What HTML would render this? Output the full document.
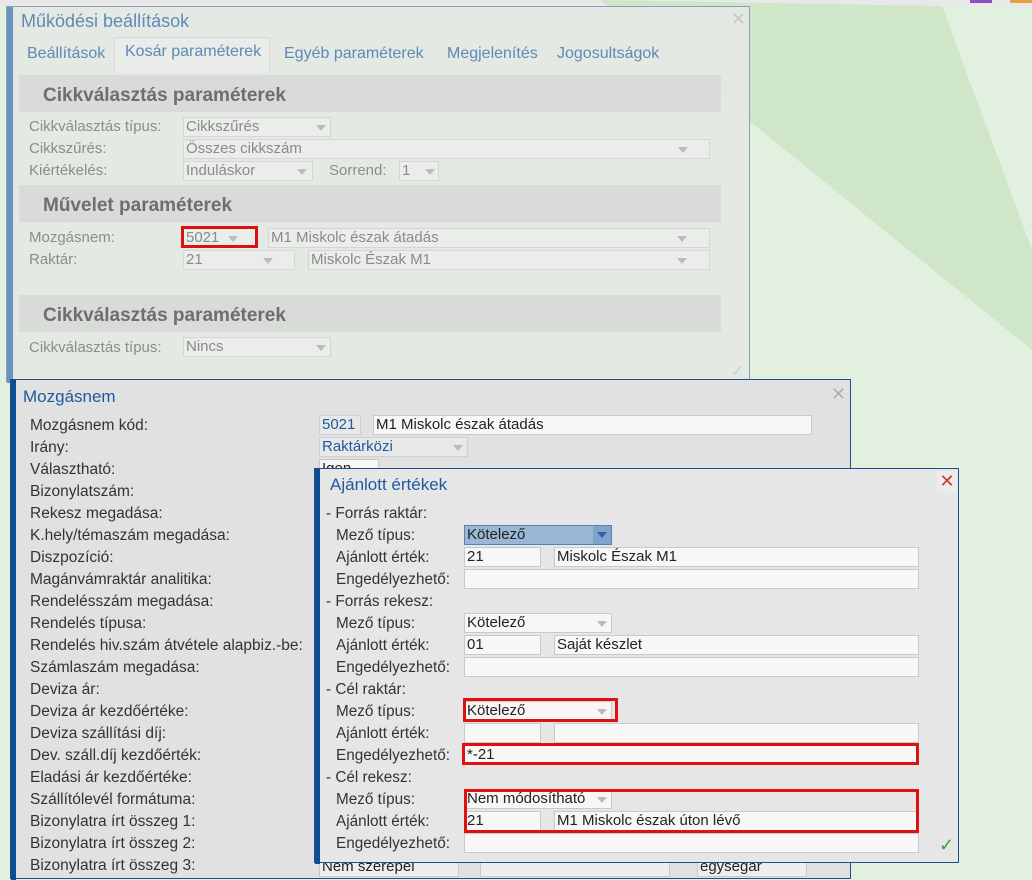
<!DOCTYPE html>
<html><head><meta charset="utf-8"><style>
*{margin:0;padding:0;box-sizing:border-box}
body{width:1032px;height:868px;overflow:hidden;position:relative;background:#e2f0e0;font-family:"Liberation Sans",Arial,sans-serif;}
.a{position:absolute;white-space:nowrap}
.in{position:absolute;height:20px;border:1px solid #c9c9c9;background:#f7f7f7;font-size:15px;line-height:18px;padding-left:2px;color:#222;white-space:nowrap;overflow:hidden}
.d1 .in{background:#eaedea;border-color:#d3d6d3;color:#8a8a8a}
.arr{position:absolute;width:0;height:0;border-left:5px solid transparent;border-right:5px solid transparent;border-top:6px solid #bbb}
.red{position:absolute;border:3px solid #e01010}
.sec{position:absolute;left:18px;width:702px;height:37px;background:#d8dbd8;font-weight:bold;font-size:19px;color:#6e6e6e;padding:10px 0 0 24px}
.l1{position:absolute;left:28px;font-size:15px;color:#8c8c8c;white-space:nowrap}
.l2{position:absolute;left:30px;font-size:15.5px;color:#333;white-space:nowrap}
.l3{position:absolute;font-size:15.3px;color:#333;white-space:nowrap}
</style></head><body>
<div class="a" style="left:0;top:0;width:1032px;height:6px;background:#e8e8e8"></div>
<div class="a" style="left:970px;top:0;width:22px;height:3px;background:#8a4fc0"></div>
<div class="a" style="left:1010px;top:0;width:22px;height:3px;background:#e8a040"></div>
<svg class="a" style="left:0;top:0" width="1032" height="868"><polygon points="600,0 942,6 1032,250 1032,350" fill="#cfe6c8"/></svg>

<!-- dialog 1 -->
<div class="a d1" style="left:6px;top:6px;width:744px;height:376px;background:rgba(228,232,228,0.93);border:1px solid #8aa0b8">
<div class="a" style="left:0;top:0;width:6px;height:376px;background:#6a94c0"></div>
<div class="a" style="left:14px;top:4px;font-size:18px;color:#5e8ab6">Működési beállítások</div>
<div class="a" style="left:724px;top:2px;font-size:18px;color:#c4c8c4">✕</div>
<div class="a" style="left:107px;top:30px;width:156px;height:36px;border:1px solid #d6dad6;border-bottom:none;background:#e9ece9"></div>
<div class="a" style="left:20px;top:38px;font-size:16px;color:#5e8ab6">Beállítások</div>
<div class="a" style="left:118px;top:36px;font-size:16px;color:#5e8ab6">Kosár paraméterek</div>
<div class="a" style="left:277px;top:38px;font-size:16px;color:#5e8ab6">Egyéb paraméterek</div>
<div class="a" style="left:440px;top:38px;font-size:16px;color:#5e8ab6">Megjelenítés</div>
<div class="a" style="left:550px;top:38px;font-size:16px;color:#5e8ab6">Jogosultságok</div>
<div class="sec" style="left:12px;top:68px">Cikkválasztás paraméterek</div>
<div class="l1" style="left:22px;top:111px">Cikkválasztás típus:</div>
<div class="in" style="left:176px;top:110px;width:148px">Cikkszűrés</div><div class="arr" style="left:309px;top:118px"></div>
<div class="l1" style="left:22px;top:133px">Cikkszűrés:</div>
<div class="in" style="left:176px;top:132px;width:527px">Összes cikkszám</div><div class="arr" style="left:671px;top:140px"></div>
<div class="l1" style="left:22px;top:155px">Kiértékelés:</div>
<div class="in" style="left:176px;top:154px;width:130px">Induláskor</div><div class="arr" style="left:290px;top:162px"></div>
<div class="l1" style="left:322px;top:155px">Sorrend:</div>
<div class="in" style="left:392px;top:154px;width:40px">1</div><div class="arr" style="left:418px;top:162px"></div>
<div class="sec" style="left:12px;top:178px">Művelet paraméterek</div>
<div class="l1" style="left:22px;top:222px">Mozgásnem:</div>
<div class="in" style="left:176px;top:221px;width:74px">5021</div><div class="arr" style="left:221px;top:229px"></div>
<div class="in" style="left:261px;top:221px;width:442px">M1 Miskolc észak átadás</div><div class="arr" style="left:670px;top:229px"></div>
<div class="l1" style="left:22px;top:244px">Raktár:</div>
<div class="in" style="left:176px;top:243px;width:112px">21</div><div class="arr" style="left:256px;top:251px"></div>
<div class="in" style="left:301px;top:243px;width:402px">Miskolc Észak M1</div><div class="arr" style="left:670px;top:251px"></div>
<div class="sec" style="left:12px;top:288px">Cikkválasztás paraméterek</div>
<div class="l1" style="left:22px;top:332px">Cikkválasztás típus:</div>
<div class="in" style="left:176px;top:330px;width:148px">Nincs</div><div class="arr" style="left:309px;top:338px"></div>
<div class="a" style="left:724px;top:354px;font-size:16px;color:#d0d4d0">✓</div>
</div>
<div class="red" style="left:181px;top:226px;width:77px;height:22px"></div>

<!-- dialog 2 -->
<div class="a" style="left:10px;top:379px;width:841px;height:500px;background:#e1e1e1;border:1px solid #1f4e8c">
<div class="a" style="left:0;top:0;width:5px;height:500px;background:#0e4c96"></div>
<div class="a" style="left:12px;top:7px;font-size:17px;color:#1f5aa0">Mozgásnem</div>
<div class="a" style="left:820px;top:4px;font-size:18px;color:#b0b0b0">✕</div>
</div>
<div class="l2" style="top:417px">Mozgásnem kód:</div>
<div class="l2" style="top:439px">Irány:</div>
<div class="l2" style="top:461px">Választható:</div>
<div class="l2" style="top:483px">Bizonylatszám:</div>
<div class="l2" style="top:505px">Rekesz megadása:</div>
<div class="l2" style="top:527px">K.hely/témaszám megadása:</div>
<div class="l2" style="top:549px">Diszpozíció:</div>
<div class="l2" style="top:571px">Magánvámraktár analitika:</div>
<div class="l2" style="top:593px">Rendelésszám megadása:</div>
<div class="l2" style="top:615px">Rendelés típusa:</div>
<div class="l2" style="top:637px">Rendelés hiv.szám átvétele alapbiz.-be:</div>
<div class="l2" style="top:659px">Számlaszám megadása:</div>
<div class="l2" style="top:681px">Deviza ár:</div>
<div class="l2" style="top:703px">Deviza ár kezdőértéke:</div>
<div class="l2" style="top:725px">Deviza szállítási díj:</div>
<div class="l2" style="top:747px">Dev. száll.díj kezdőérték:</div>
<div class="l2" style="top:769px">Eladási ár kezdőértéke:</div>
<div class="l2" style="top:791px">Szállítólevél formátuma:</div>
<div class="l2" style="top:813px">Bizonylatra írt összeg 1:</div>
<div class="l2" style="top:835px">Bizonylatra írt összeg 2:</div>
<div class="l2" style="top:857px">Bizonylatra írt összeg 3:</div>
<div class="in" style="left:319px;top:415px;width:42px;color:#1f5aa0;background:#e8e8e8;border-color:#d0d0d0">5021</div>
<div class="in" style="left:373px;top:415px;width:439px">M1 Miskolc észak átadás</div>
<div class="in" style="left:319px;top:437px;width:149px;color:#1f5aa0;background:#e8e8e8;border-color:#d0d0d0">Raktárközi</div><div class="arr" style="left:453px;top:445px"></div>
<div class="in" style="left:319px;top:459px;width:60px">Igen</div>
<div class="in" style="left:319px;top:857px;width:140px;background:#eee">Nem szerepel</div>
<div class="in" style="left:480px;top:857px;width:190px;background:#eee"></div>
<div class="in" style="left:697px;top:857px;width:110px;background:#eee">egységár</div>

<!-- dialog 3 -->
<div class="a" style="left:314px;top:468px;width:645px;height:395px;background:#e6e6e6;border:1px solid #1f4e8c">
<div class="a" style="left:0;top:0;width:5px;height:395px;background:#0e4c96"></div>
<div class="a" style="left:15px;top:6px;font-size:17px;color:#1f5aa0">Ajánlott értékek</div>
<div class="a" style="left:622px;top:2px;width:20px;height:22px;background:#ececec;font-size:18px;color:#d03a2a;text-align:center">✕</div>
<div class="a" style="left:624px;top:366px;font-size:18px;color:#3aa040">✓</div>
</div>
<div class="l3" style="left:326px;top:505px">- Forrás raktár:</div>
<div class="l3" style="left:336px;top:527px">Mező típus:</div>
<div class="in" style="left:464px;top:525px;width:148px;background:#9ab7d6;border-color:#5a7fb0">Kötelező</div>
<div class="a" style="left:593px;top:526px;width:18px;height:18px;background:#7fa3cb"></div><div class="arr" style="left:597px;top:532px;border-top-color:#2a62b0"></div>
<div class="l3" style="left:336px;top:549px">Ajánlott érték:</div>
<div class="in" style="left:464px;top:547px;width:77px">21</div>
<div class="in" style="left:554px;top:547px;width:365px">Miskolc Észak M1</div>
<div class="l3" style="left:336px;top:571px">Engedélyezhető:</div>
<div class="in" style="left:464px;top:569px;width:455px"></div>
<div class="l3" style="left:326px;top:593px">- Forrás rekesz:</div>
<div class="l3" style="left:336px;top:615px">Mező típus:</div>
<div class="in" style="left:464px;top:613px;width:148px">Kötelező</div><div class="arr" style="left:597px;top:621px"></div>
<div class="l3" style="left:336px;top:637px">Ajánlott érték:</div>
<div class="in" style="left:464px;top:635px;width:77px">01</div>
<div class="in" style="left:554px;top:635px;width:365px">Saját készlet</div>
<div class="l3" style="left:336px;top:659px">Engedélyezhető:</div>
<div class="in" style="left:464px;top:657px;width:455px"></div>
<div class="l3" style="left:326px;top:681px">- Cél raktár:</div>
<div class="l3" style="left:336px;top:703px">Mező típus:</div>
<div class="in" style="left:464px;top:701px;width:148px">Kötelező</div><div class="arr" style="left:597px;top:709px"></div>
<div class="l3" style="left:336px;top:725px">Ajánlott érték:</div>
<div class="in" style="left:464px;top:723px;width:77px"></div>
<div class="in" style="left:554px;top:723px;width:365px"></div>
<div class="l3" style="left:336px;top:747px">Engedélyezhető:</div>
<div class="in" style="left:464px;top:745px;width:455px">*-21</div>
<div class="l3" style="left:326px;top:769px">- Cél rekesz:</div>
<div class="l3" style="left:336px;top:791px">Mező típus:</div>
<div class="in" style="left:464px;top:789px;width:148px">Nem módosítható</div><div class="arr" style="left:597px;top:797px"></div>
<div class="l3" style="left:336px;top:813px">Ajánlott érték:</div>
<div class="in" style="left:464px;top:811px;width:77px">21</div>
<div class="in" style="left:554px;top:811px;width:365px">M1 Miskolc észak úton lévő</div>
<div class="l3" style="left:336px;top:835px">Engedélyezhető:</div>
<div class="in" style="left:464px;top:833px;width:455px"></div>
<div class="red" style="left:463px;top:698px;width:155px;height:24px"></div>
<div class="red" style="left:462px;top:743px;width:457px;height:22px"></div>
<div class="red" style="left:464px;top:789px;width:455px;height:44px"></div>
</body></html>
